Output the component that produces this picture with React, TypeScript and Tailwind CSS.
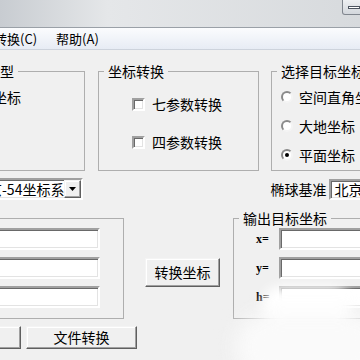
import React from 'react';

const font = "font-['Noto_Sans_CJK_SC',sans-serif]";
const sunken =
  'border-2 border-t-[#a0a0a0] border-l-[#a0a0a0] border-b-white border-r-white shadow-[inset_1px_1px_0_#696969,inset_-1px_-1px_0_#e3e3e3] bg-white';
const raised =
  'border border-t-[#f4f4f4] border-l-[#f4f4f4] border-r-[#5f5f5f] border-b-[#5f5f5f] shadow-[inset_-1px_-1px_0_#a0a0a0,inset_1px_1px_0_#fff] bg-[#f0f0f0]';

function Group({ title, className, children }: { title: string; className: string; children?: React.ReactNode }) {
  return (
    <fieldset className={`border border-[#aeaeae] ${className}`}>
      <legend className="ml-[5px] px-[4px] text-[14px] leading-[18px]">{title}</legend>
      {children}
    </fieldset>
  );
}

function Check({ label }: { label: string }) {
  return (
    <div className="flex items-center h-[20px] gap-[7px]">
      <span className={`w-[13px] h-[13px] ${sunken}`} />
      <span className="text-[14px] leading-[20px]">{label}</span>
    </div>
  );
}

function Radio({ label, checked }: { label: string; checked?: boolean }) {
  return (
    <div className="flex items-center h-[20px] gap-[6px]">
      <span className="w-[12px] h-[12px] rounded-full bg-white border-2 border-t-[#8a8a8a] border-l-[#8a8a8a] border-r-[#f4f4f4] border-b-[#f4f4f4] flex items-center justify-center">
        {checked && <span className="w-[4px] h-[4px] rounded-full bg-black" />}
      </span>
      <span className="text-[14px] leading-[20px]">{label}</span>
    </div>
  );
}

function Field({ className = '' }: { className?: string }) {
  return <div className={`h-[22px] ${sunken} ${className}`} />;
}

export default function App() {
  return (
    <div className={`relative w-[360px] h-[360px] overflow-hidden bg-[#f0f0f0] text-black ${font}`}>
      {/* title bar */}
      <div className="h-[28px] flex justify-end items-start border-b border-[#9aa0a7] bg-linear-to-r from-[#c8ccd1] via-[#e5e7e9] via-30% to-[#d7dadd]">
        <div className="w-[26px] h-[15px] mr-[-8px] rounded-b-[3px] border border-t-0 border-[#80868e] bg-linear-to-b from-[#eef0f2] to-[#d3d7dc] flex items-center pl-[5px]">
          <span className="w-[12px] h-[3px] border border-[#4d5560] bg-white" />
        </div>
      </div>
      {/* menu bar */}
      <div className="h-[22px] flex items-center gap-[19px] ml-[-6px] text-[13px] border-b border-[#cdd3dc] bg-linear-to-b from-[#fbfcfe] to-[#e7ecf4]">
        <span>转换(C)</span>
        <span>帮助(A)</span>
      </div>

      <div className="pt-[12px]">
        {/* row 1 */}
        <div className="flex items-start ml-[-24px] gap-[13px]">
          <Group title="类型" className="w-[109px] h-[109px] shrink-0">
            <div className="pt-[7px] pl-[16px] text-[14px] leading-[20px]">坐标</div>
          </Group>
          <Group title="坐标转换" className="w-[161px] h-[109px] shrink-0 mr-[-1px]">
            <div className="pt-[14px] pl-[33px] flex flex-col gap-[18px]">
              <Check label="七参数转换" />
              <Check label="四参数转换" />
            </div>
          </Group>
          <Group title="选择目标坐标" className="w-[110px] h-[109px] shrink-0">
            <div className="pt-[7px] pl-[9px] flex flex-col gap-[9px] whitespace-nowrap">
              <Radio label="空间直角坐标" />
              <Radio label="大地坐标" />
              <Radio label="平面坐标" checked />
            </div>
          </Group>
        </div>

        {/* row 2 */}
        <div className="flex items-center mt-[7px] ml-[-24px] h-[22px]">
          <div className={`w-[109px] h-[22px] flex items-center ${sunken}`}>
            <span className="flex-1 pl-[10px] text-[14px] leading-[18px] whitespace-nowrap overflow-hidden">京-54坐标系</span>
            <span className={`w-[17px] h-[18px] flex items-center justify-center ${raised}`}>
              <svg width="7" height="4" viewBox="0 0 7 4"><path d="M0 0h7L3.5 4z" fill="#000" /></svg>
            </span>
          </div>
          <span className="ml-[187px] text-[14px] whitespace-nowrap">椭球基准</span>
          <div className={`ml-[3px] w-[60px] h-[21px] shrink-0 flex items-center pl-[3px] text-[14px] ${sunken}`}>北京</div>
        </div>

        {/* row 3 */}
        <div className="flex items-start mt-[9px]">
          <div className="mt-[9px] ml-[-30px] w-[154px] h-[101px] shrink-0 border border-[#aeaeae] pt-[9px] pl-[19px] flex flex-col gap-[7px]">
            <Field className="w-[110px]" />
            <Field className="w-[110px]" />
            <Field className="w-[110px]" />
          </div>
          <button className={`mt-[49px] ml-[21px] w-[75px] h-[29px] shrink-0 text-[14px] ${raised}`}>转换坐标</button>
          <Group title="输出目标坐标" className="ml-[13px] w-[140px] h-[110px] shrink-0">
            <div className="pt-[1px] pl-[22px] flex flex-col gap-[7px]">
              {['x=', 'y=', 'h='].map((l) => (
                <div key={l} className="flex items-center h-[22px]">
                  <span className="w-[23px] text-[12px] font-bold font-['Liberation_Serif',serif]">{l}</span>
                  <Field className="w-[100px]" />
                </div>
              ))}
            </div>
          </Group>
        </div>

        {/* row 4 */}
        <div className="flex items-center mt-[7px] ml-[-30px] gap-[5px]">
          <button className={`w-[51px] h-[23px] ${raised}`} />
          <button className={`w-[111px] h-[23px] text-[14px] ${raised}`}>文件转换</button>
        </div>
      </div>

      {/* watermark smear */}
      <div className="absolute left-[262px] top-[286px] w-[90px] h-[40px] rounded-full bg-white blur-[6px]" />
      <div className="absolute left-[235px] top-[312px] w-[150px] h-[70px] rounded-full bg-[#fafafa] blur-[10px]" />
    </div>
  );
}
